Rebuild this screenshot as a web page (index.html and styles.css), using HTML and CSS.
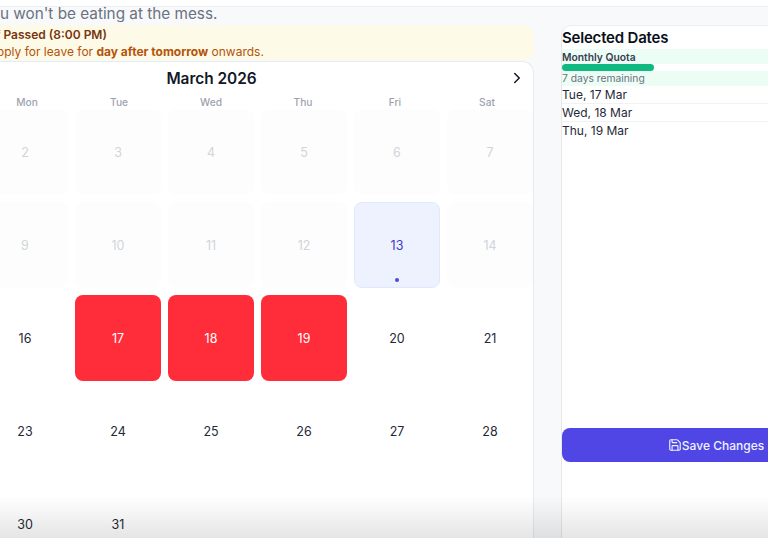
FILE: index.html
```html
<!DOCTYPE html>
<html lang="en">
<head>
<meta charset="UTF-8" />
<title>Mess Leave</title>
<link rel="stylesheet" href="styles.css">
</head>
<body>
  <div class="top-bar"></div>
  <div class="page">
    <div class="main-col">
      <p class="intro">Select dates you won't be eating at the mess.</p>
      <div class="notice">
        <div class="notice-title">
          <svg viewBox="0 0 24 24"><circle cx="12" cy="12" r="10"/><path d="M12 6v6l4 2"/></svg>
          Cutoff Passed (8:00 PM)
        </div>
        <div class="notice-text">Please apply for leave for <b>day after tomorrow</b> onwards.</div>
      </div>
      <div class="calendar">
        <div class="cal-head">
          <svg class="chevron" viewBox="0 0 24 24"><path d="m15 18-6-6 6-6"/></svg>
          <h2>March 2026</h2>
          <svg class="chevron" viewBox="0 0 24 24"><path d="m9 18 6-6-6-6"/></svg>
        </div>
        <div class="weekdays">
          <span>Sun</span><span>Mon</span><span>Tue</span><span>Wed</span><span>Thu</span><span>Fri</span><span>Sat</span>
        </div>
        <div class="days">
          <div class="day past">1</div>
          <div class="day past">2</div>
          <div class="day past">3</div>
          <div class="day past">4</div>
          <div class="day past">5</div>
          <div class="day past">6</div>
          <div class="day past">7</div>
          <div class="day past">8</div>
          <div class="day past">9</div>
          <div class="day past">10</div>
          <div class="day past">11</div>
          <div class="day past">12</div>
          <div class="day today">13<i class="dot"></i></div>
          <div class="day past">14</div>
          <div class="day">15</div>
          <div class="day">16</div>
          <div class="day picked">17</div>
          <div class="day picked">18</div>
          <div class="day picked">19</div>
          <div class="day">20</div>
          <div class="day">21</div>
          <div class="day">22</div>
          <div class="day">23</div>
          <div class="day">24</div>
          <div class="day">25</div>
          <div class="day">26</div>
          <div class="day">27</div>
          <div class="day">28</div>
          <div class="day">29</div>
          <div class="day">30</div>
          <div class="day">31</div>
        </div>
      </div>
    </div>

    <aside class="side">
      <h3>Selected Dates</h3>
      <div class="quota">
        <div class="quota-label">Monthly Quota</div>
        <div class="quota-track"><div class="quota-fill" style="width: 30%"></div></div>
        <div class="quota-note">7 days remaining</div>
      </div>
      <ul class="picked-list">
        <li>Tue, 17 Mar</li>
        <li>Wed, 18 Mar</li>
        <li>Thu, 19 Mar</li>
      </ul>
      <button class="save">
        <svg viewBox="0 0 24 24"><path d="M15.2 3a2 2 0 0 1 1.4.6l3.8 3.8a2 2 0 0 1 .6 1.4V19a2 2 0 0 1-2 2H5a2 2 0 0 1-2-2V5a2 2 0 0 1 2-2z"/><path d="M17 21v-7a1 1 0 0 0-1-1H8a1 1 0 0 0-1 1v7"/><path d="M7 3v4a1 1 0 0 0 1 1h7"/></svg>
        Save Changes
      </button>
    </aside>
  </div>
  <div class="fade"></div>
</body>
</html>
```

FILE: styles.css
```css
html, body {
  height: 100%;
}

body {
  margin: 0;
  overflow: hidden;
  background-color: #f8f9fb;
  font-family: Inter, "Liberation Sans", sans-serif;
  color: #111827;
}

.top-bar {
  height: 6px;
  background: white;
  border-bottom: 1px solid #eceef1;
}

/* the page is wider than the window, its left side is cut off */
.page {
  display: grid;
  grid-template-columns: 645px 309px;
  column-gap: 27px;
  width: 981px;
  margin-left: -111px;
}

.intro {
  margin: 0;
  height: 18px;
  font-size: 15.3px;
  line-height: 14px;
  color: #6b7280;
}

.notice {
  height: 35px;
  box-sizing: border-box;
  padding: 1px 16px 0 60px;
  background: #fefae8;
  border-radius: 10px;
  font-size: 12px;
  line-height: 17px;
  color: #b45309;
}

.notice-title {
  display: flex;
  align-items: center;
  gap: 3px;
  font-weight: 600;
  color: #78350f;
}

.notice-title svg {
  width: 12px;
  height: 12px;
  fill: none;
  stroke: currentColor;
  stroke-width: 2;
}

.calendar {
  margin-top: 1px;
  height: 600px;
  background: white;
  border: 1px solid #e8eaee;
  border-bottom: none;
  border-radius: 12px;
  box-sizing: border-box;
}

.cal-head {
  display: flex;
  justify-content: space-between;
  align-items: center;
  height: 32px;
  padding: 0 7px;
}

.cal-head h2 {
  margin: 0;
  font-size: 15.4px;
  font-weight: 600;
}

.chevron {
  width: 18px;
  height: 18px;
  fill: none;
  stroke: #111827;
  stroke-width: 2;
  stroke-linecap: round;
  stroke-linejoin: round;
}

.weekdays {
  display: grid;
  grid-template-columns: repeat(7, 92px);
  margin-left: -1px;
  height: 15px;
  font-size: 10.2px;
  font-weight: 500;
  line-height: 17px;
  text-align: center;
  color: #9ca3af;
}

.days {
  display: grid;
  grid-template-columns: repeat(7, 86px);
  grid-auto-rows: 86px;
  gap: 7px;
  margin-left: -1px;
}

.day {
  position: relative;
  display: flex;
  justify-content: center;
  align-items: center;
  box-sizing: border-box;
  border-radius: 8px;
  font-size: 12.5px;
  color: #1f2937;
}

.day.past {
  background: #fcfdfc;
  color: #d1d5db;
}

.day.today {
  background: #eef2ff;
  border: 1px solid #e0e7ff;
  color: #4338ca;
}

.day.picked {
  background: #ff2d3a;
  color: white;
}

.dot {
  position: absolute;
  left: 50%;
  bottom: 5px;
  width: 4px;
  height: 4px;
  margin-left: -2px;
  border-radius: 50%;
  background: #4f46e5;
}

.side {
  display: flex;
  flex-direction: column;
  height: 600px;
  background: white;
  border-left: 1px solid #e5e7eb;
  border-top: 1px solid #eceef1;
  border-radius: 10px 0 0 0;
  margin-top: 18px;
}

.side h3 {
  margin: 0;
  height: 23px;
  font-size: 15px;
  font-weight: 600;
  letter-spacing: -0.2px;
  line-height: 24px;
  color: #0b0f19;
}

.quota {
  height: 37px;
  background: #ecfdf5;
  font-size: 10.3px;
  line-height: 15px;
}

.quota-label {
  height: 15px;
  line-height: 16px;
  font-weight: 600;
  color: #374151;
}

.quota-track {
  height: 7px;
  background: white;
}

.quota-fill {
  height: 100%;
  border-radius: 4px;
  background: #10b981;
}

.quota-note {
  color: #6b7280;
}

.picked-list {
  margin: 0;
  padding: 0;
  list-style: none;
  height: 342px;
}

.picked-list li {
  height: 17px;
  border-bottom: 1px solid #f1f2f4;
  font-size: 12px;
  line-height: 17px;
  color: #1f2937;
}

.picked-list li:last-child {
  border-bottom: none;
}

.save {
  display: flex;
  justify-content: center;
  align-items: center;
  height: 34px;
  border: none;
  border-radius: 8px;
  background: #4f46e5;
  color: #eef2ff;
  font-family: inherit;
  font-size: 12px;
  font-weight: 500;
}

.save svg {
  width: 14px;
  height: 14px;
  fill: none;
  stroke: currentColor;
  stroke-width: 2;
  stroke-linecap: round;
  stroke-linejoin: round;
}

.fade {
  position: fixed;
  left: 0;
  right: 0;
  bottom: 0;
  height: 42px;
  background: linear-gradient(to bottom, rgba(0,0,0,0), rgba(0,0,0,0.1));
  pointer-events: none;
}
```
